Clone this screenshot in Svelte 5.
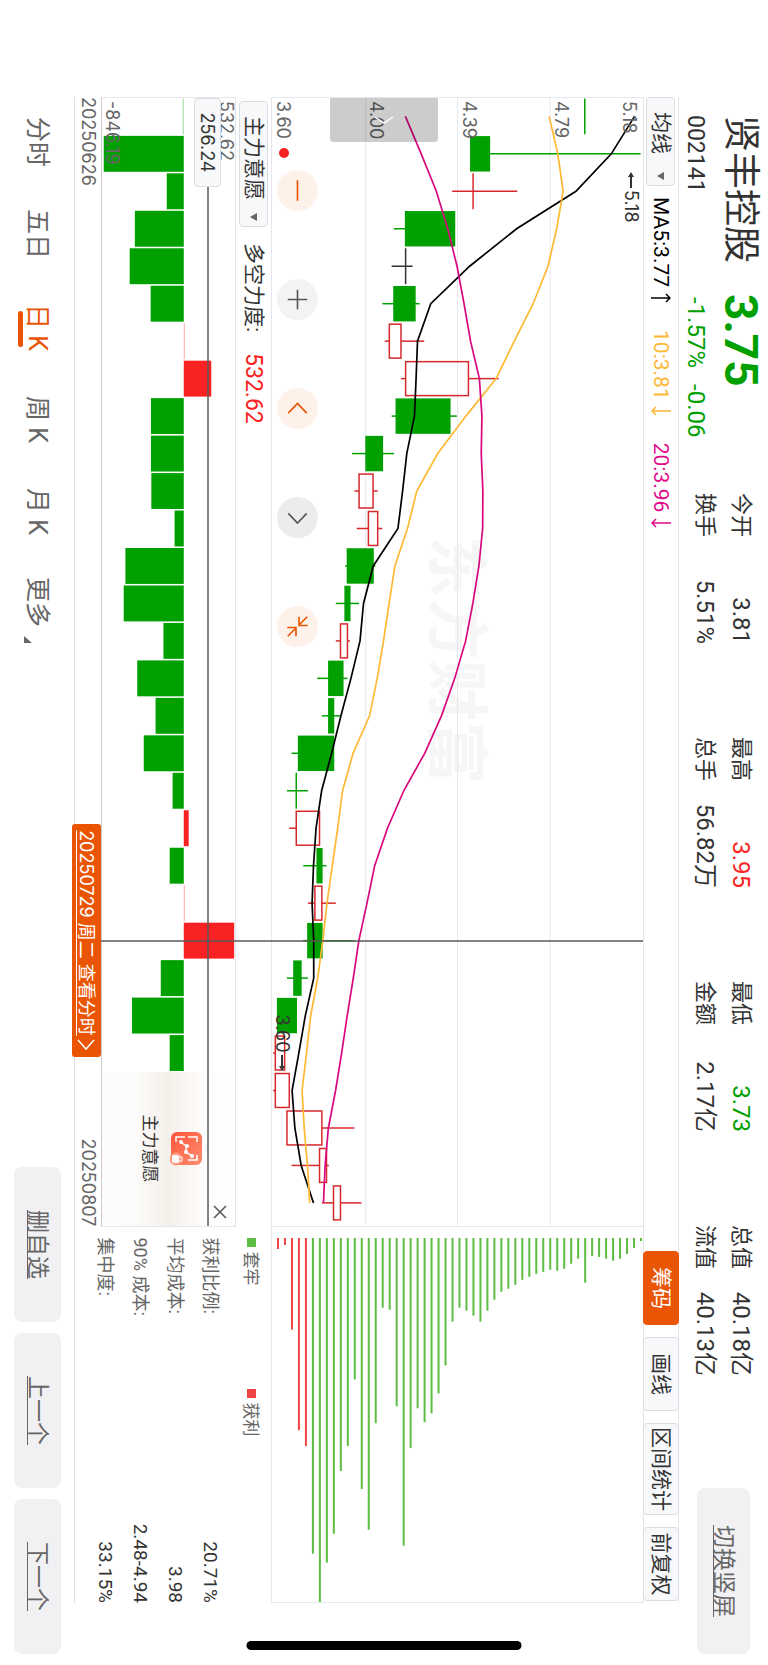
<script lang="ts">
    type Dir = 'up' | 'down' | 'flat';

    const quotes = [
        { label: '今开', value: '3.81', tone: '' },
        { label: '最高', value: '3.95', tone: 'rise' },
        { label: '最低', value: '3.73', tone: 'fall' },
        { label: '总值', value: '40.18亿', tone: '' },
        { label: '换手', value: '5.51%', tone: '' },
        { label: '总手', value: '56.82万', tone: '' },
        { label: '金额', value: '2.17亿', tone: '' },
        { label: '流值', value: '40.13亿', tone: '' },
    ];

    const tools = ['筹码', '画线', '区间统计', '前复权'];
    let activeTool = $state('筹码');

    const tabs = ['分时', '五日', '日 K', '周 K', '月 K', '更多'];
    let activeTab = $state('日 K');

    const stats = [
        ['获利比例:', '20.71%'],
        ['平均成本:', '3.98'],
        ['90% 成本:', '2.48-4.94'],
        ['集中度:', '33.15%'],
    ];

    // direction, body bottom, body top, low, high
    const candles: [Dir, number, number, number, number][] = [
        ['down', 4.94, 4.94, 4.94, 4.94],
        ['down', 4.45, 4.53, 4.45, 5.18],
        ['up', 4.46, 4.46, 4.37, 4.65],
        ['down', 4.17, 4.38, 4.12, 4.38],
        ['flat', 4.17, 4.17, 4.11, 4.2],
        ['down', 4.12, 4.21, 4.07, 4.23],
        ['up', 4.1, 4.15, 4.08, 4.25],
        ['up', 4.17, 4.44, 4.15, 4.57],
        ['down', 4.13, 4.36, 4.11, 4.39],
        ['down', 4.0, 4.07, 3.94, 4.12],
        ['up', 3.97, 4.03, 3.95, 4.05],
        ['up', 4.01, 4.05, 3.96, 4.07],
        ['down', 3.92, 4.03, 3.91, 4.04],
        ['down', 3.91, 3.93, 3.87, 3.97],
        ['up', 3.89, 3.92, 3.87, 3.93],
        ['down', 3.84, 3.9, 3.79, 3.92],
        ['down', 3.84, 3.86, 3.81, 3.89],
        ['down', 3.71, 3.86, 3.68, 3.86],
        ['down', 3.7, 3.7, 3.66, 3.75],
        ['up', 3.7, 3.8, 3.67, 3.8],
        ['down', 3.79, 3.81, 3.73, 3.83],
        ['up', 3.78, 3.81, 3.75, 3.87],
        ['down', 3.75, 3.81, 3.73, 3.95],
        ['down', 3.69, 3.72, 3.66, 3.75],
        ['down', 3.62, 3.7, 3.62, 3.7],
        ['up', 3.61, 3.65, 3.6, 3.65],
        ['up', 3.61, 3.67, 3.6, 3.67],
        ['up', 3.66, 3.81, 3.66, 3.95],
        ['up', 3.8, 3.83, 3.68, 3.84],
        ['up', 3.86, 3.89, 3.81, 3.98],
    ];

    const averages = [
        {
            name: 'ma5',
            points: [
                5.154, 5.054, 4.902, 4.647, 4.445, 4.278, 4.221, 4.215, 4.208, 4.175,
                4.157, 4.137, 4.031, 3.989, 3.974, 3.935, 3.892, 3.852, 3.809, 3.785,
                3.774, 3.768, 3.775, 3.775, 3.739, 3.711, 3.682, 3.694, 3.721, 3.774,
            ],
        },
        {
            name: 'ma10',
            points: [
                4.787, 4.824, 4.847, 4.819, 4.782, 4.718, 4.637, 4.559, 4.429, 4.308,
                4.218, 4.178, 4.124, 4.099, 4.075, 4.048, 4.015, 3.944, 3.899, 3.878,
                3.855, 3.832, 3.814, 3.792, 3.762, 3.744, 3.725, 3.734, 3.748, 3.758,
            ],
        },
        {
            name: 'ma20',
            points: [
                4.169, 4.237, 4.302, 4.351, 4.391, 4.421, 4.449, 4.487, 4.498, 4.495,
                4.502, 4.501, 4.485, 4.459, 4.428, 4.381, 4.324, 4.252, 4.162, 4.092,
                4.037, 4.004, 3.969, 3.945, 3.919, 3.895, 3.869, 3.838, 3.824, 3.817,
            ],
        },
    ];

    const force = [
        -3, -846.19, -180, -517, -572, -350, 4, 291, -347, -347, -343, -97, -617,
        -635, -215, -492, -298, -423, -118, 52, -149, 4, 532.62, -243, -548, -149,
    ];

    // chip distribution, cheapest price first
    const chips = [
        11, 7, 92, 193, 209, 317, 366, 326, 297, 234, 209, 142, 252, 293, 186, 70,
        72, 169, 309, 211, 171, 185, 176, 156, 128, 84, 70, 73, 78, 84, 73, 62, 54,
        51, 47, 42, 39, 36, 34, 32, 33, 31, 26, 21, 45, 18, 19, 21, 23, 21, 16, 10, 3,
    ];
    const profitLevels = 5;

    const x = (i: number) => 18.4 + i * 37.55;
    const y = (price: number) => 371 - (price - 3.6) * 233.3;
    const line = (points: number[]) => points.map((p, i) => `${x(i)},${y(p)}`).join(' ');
    const forceSize = (v: number) => Math.max(Math.abs(v) * 0.096, 1);
</script>

<div class="page">
    <main class="screen">
        <header>
            <div class="stock">
                <h1>贤丰控股</h1>
                <strong class="fall">3.75</strong>
                <span>002141</span>
                <span class="change fall"><span>-1.57%</span><span>-0.06</span></span>
            </div>
            <dl class="quotes">
                {#each quotes as q}
                    <div>
                        <dt>{q.label}</dt>
                        <dd class={q.tone}>{q.value}</dd>
                    </div>
                {/each}
            </dl>
            <button class="soft switch">切换竖屏</button>
        </header>

        <section class="body">
            <div class="toolbar">
                <span class="picker">
                    <select aria-label="主图指标"><option>均线</option></select>
                </span>
                <span class="ma5">MA5:3.77
                    <svg class="arrow" viewBox="0 0 10 20"><path d="M5 20V1M1 5l4-4 4 4" /></svg>
                </span>
                <span class="ma10">10:3.81
                    <svg class="arrow" viewBox="0 0 10 20"><path d="M5 0v19M1 15l4 4 4-4" /></svg>
                </span>
                <span class="ma20">20:3.96
                    <svg class="arrow" viewBox="0 0 10 20"><path d="M5 0v19M1 15l4 4 4-4" /></svg>
                </span>
                <div class="tools">
                    {#each tools as tool}
                        <button class:active={tool === activeTool} onclick={() => (activeTool = tool)}>{tool}</button>
                    {/each}
                </div>
            </div>

            <div class="columns">
                <div class="charts">
                    <div class="kline">
                        <div class="watermark">东方财富</div>
                        <svg class="plot" viewBox="0 0 1130 372" preserveAspectRatio="none">
                            {#each [93, 186, 278] as gy}
                                <line class="grid" x1="0" x2="1130" y1={gy} y2={gy} />
                            {/each}
                            {#each candles as [dir, bottom, top, low, high], i}
                                <g class={dir}>
                                    {#if high > top}
                                        <line x1={x(i)} x2={x(i)} y1={y(high)} y2={y(top)} />
                                    {/if}
                                    {#if low < bottom}
                                        <line x1={x(i)} x2={x(i)} y1={y(bottom)} y2={y(low)} />
                                    {/if}
                                    {#if top === bottom}
                                        <line x1={x(i) - 18} x2={x(i) + 18} y1={y(top)} y2={y(top)} />
                                    {:else}
                                        <rect x={x(i) - 17} y={y(top)} width="34" height={y(bottom) - y(top)} />
                                    {/if}
                                </g>
                            {/each}
                            {#each averages as ma}
                                <polyline class={ma.name} points={line(ma.points)} />
                            {/each}
                        </svg>
                        <span class="axis p0">5.18</span>
                        <span class="axis p1">4.79</span>
                        <span class="axis p2">4.39</span>
                        <span class="axis p3">4.00</span>
                        <span class="axis p4">3.60</span>
                        <span class="mark highest">
                            <svg viewBox="0 0 16 8"><path d="M16 4H3" /><path class="head" d="M0 4l5-3v6z" /></svg>5.18
                        </span>
                        <span class="mark lowest">
                            3.60<svg viewBox="0 0 16 8"><path d="M0 4h13" /><path class="head" d="M16 4l-5-3v6z" /></svg>
                        </span>
                        <button class="drawer" aria-label="展开">
                            <svg viewBox="0 0 8 20"><path d="M1 1l6 9-6 9" /></svg>
                        </button>
                        <i class="dot"></i>
                        <div class="controls">
                            <button class="warm" aria-label="缩小">
                                <svg viewBox="0 0 40 40"><path d="M20 10v20" transform="rotate(90 20 20)" /></svg>
                            </button>
                            <button aria-label="放大">
                                <svg viewBox="0 0 40 40"><path d="M10.5 20h19M20 10.5v19" /></svg>
                            </button>
                            <button class="warm" aria-label="左移">
                                <svg viewBox="0 0 40 40"><path d="M24.5 11L15 20l9.5 9" /></svg>
                            </button>
                            <button class="dim" aria-label="右移">
                                <svg viewBox="0 0 40 40"><path d="M16 11l9.5 9-9.5 9" /></svg>
                            </button>
                            <button class="warm" aria-label="收起">
                                <svg viewBox="0 0 40 40"><path d="M10.5 10.5l8 8M19 10v8.5h-8.5M29.5 29.5l-8-8M21 30v-8.5h8.5" /></svg>
                            </button>
                        </div>
                    </div>

                    <div class="indicator">
                        <span class="picker">
                            <select aria-label="副图指标"><option>主力意愿</option></select>
                        </span>
                        <span>多空力度:</span>
                        <span class="rise">532.62</span>
                    </div>

                    <div class="force">
                        <svg class="plot" viewBox="0 0 1130 135" preserveAspectRatio="none">
                            {#each force as v, i}
                                <rect
                                    class:faint={Math.abs(v) < 10}
                                    class:gain={v > 0}
                                    x={x(i) - 18}
                                    y={v > 0 ? 52 - forceSize(v) : 52}
                                    width="36"
                                    height={forceSize(v)}
                                />
                            {/each}
                        </svg>
                        <span class="axis top">532.62</span>
                        <span class="axis bottom">-846.19</span>
                        <div class="promo">
                            <svg viewBox="0 0 34 32">
                                <defs>
                                    <linearGradient id="badge" x1="0" y1="1" x2="1" y2="0">
                                        <stop offset="0" stop-color="#ff5338" />
                                        <stop offset="1" stop-color="#ff8f72" />
                                    </linearGradient>
                                </defs>
                                <rect width="33" height="31" rx="6" fill="url(#badge)" />
                                <g stroke="#fff" stroke-width="1.5">
                                    <path d="M5 14V5h5M23 5h5v9M5 17v9h5M23 26h2" />
                                    <path d="M10 21l4-5h6l4-6" />
                                </g>
                                <g fill="#fff">
                                    <circle cx="10" cy="21" r="2" />
                                    <circle cx="14" cy="15" r="2" />
                                    <circle cx="20" cy="16" r="2" />
                                    <circle cx="24" cy="10" r="2" />
                                </g>
                                <circle cx="27" cy="26" r="6.5" fill="#ff9b80" />
                                <rect x="23" y="23" width="8" height="7" rx="2" fill="#fff" />
                                <path d="M25 23v-3h4v3" stroke="#fff" />
                            </svg>
                            <span>主力意愿</span>
                        </div>
                        <i class="level"></i>
                        <span class="level-tag">256.24</span>
                        <button class="close" aria-label="关闭">
                            <svg viewBox="0 0 14 14"><path d="M1 1l12 12M13 1L1 13" /></svg>
                        </button>
                    </div>

                    <div class="dates">
                        <time>20250626</time>
                        <time>20250807</time>
                        <a href="#intraday" class="date-tag">
                            <span>20250729 周二 查看分时</span>
                            <svg viewBox="0 0 12 18"><path d="M1 1l9 8-9 8" /></svg>
                        </a>
                    </div>
                    <i class="cursor"></i>
                </div>

                <aside>
                    <svg class="chips" viewBox="0 0 377 372" preserveAspectRatio="none">
                        {#each chips as size, k}
                            <line class:profit={k < profitLevels} x1="11" x2={11 + size} y1={366 - k * 7} y2={366 - k * 7} />
                        {/each}
                    </svg>
                    <div class="legend">
                        <span>套牢</span>
                        <span class="profit">获利</span>
                    </div>
                    <dl class="stats">
                        {#each stats as [label, value]}
                            <div>
                                <dt>{label}</dt>
                                <dd>{value}</dd>
                            </div>
                        {/each}
                    </dl>
                </aside>
            </div>
        </section>

        <footer>
            <nav>
                {#each tabs as tab}
                    <button class:active={tab === activeTab} class:more={tab === '更多'} onclick={() => (activeTab = tab)}>{tab}</button>
                {/each}
            </nav>
            <button class="soft">删自选</button>
            <button class="soft">上一个</button>
            <button class="soft">下一个</button>
        </footer>
        <i class="home-bar"></i>
    </main>
</div>

<style>
    :global(body) {
        margin: 0;
        background: #fff;
    }

    .page {
        width: 100vw;
        height: 100vh;
        overflow: hidden;
    }

    /* landscape screen held in a portrait window */
    .screen {
        position: relative;
        display: flex;
        flex-direction: column;
        width: 100vh;
        height: 100vw;
        transform: translateX(100vw) rotate(90deg);
        transform-origin: 0 0;
        background: #fff;
        color: #333;
        font-family: Roboto, "Noto Sans CJK SC", sans-serif;
        font-size: 22px;
        line-height: 1;
    }

    h1,
    dl,
    dd {
        margin: 0;
    }

    button,
    select {
        margin: 0;
        padding: 0;
        border: 0;
        background: none;
        color: inherit;
        font: inherit;
        white-space: nowrap;
    }

    svg {
        flex: none;
        fill: none;
    }

    .rise {
        color: #fa2222;
    }

    .fall {
        color: #00a000;
    }

    .soft {
        flex: none;
        border-radius: 8px;
        background: #f1f1f3;
        color: #666;
        font-size: 23px;
        text-decoration: underline;
        text-underline-offset: 2px;
        text-decoration-thickness: 1px;
    }

    /* header */
    header {
        display: flex;
        align-items: flex-start;
        box-sizing: border-box;
        height: 89px;
        padding: 0 11px 0 115px;
    }

    .stock {
        display: grid;
        grid-template-columns: auto auto;
        grid-template-rows: 54px 36px;
        column-gap: 31px;
        align-items: center;
        justify-content: start;
        width: 378px;
        font-size: 23px;
    }

    h1 {
        font-size: 37px;
        font-weight: 400;
    }

    strong {
        font-size: 46px;
        font-weight: 700;
    }

    .change {
        display: flex;
        gap: 16px;
        padding-left: 3px;
        font-size: 24px;
    }

    .quotes {
        display: grid;
        grid-template-columns: repeat(4, 151px);
        grid-auto-rows: 36px;
        column-gap: 93px;
        padding-top: 9px;
    }

    .quotes div {
        display: flex;
        align-items: center;
        justify-content: space-between;
    }

    .quotes dd {
        font-size: 24px;
    }

    .switch {
        width: 166px;
        height: 53px;
        margin: 18px 0 0 auto;
    }

    /* toolbar */
    .body {
        flex: 1;
        display: flex;
        flex-direction: column;
        margin: 0 62px 0 97px;
    }

    .toolbar,
    .indicator {
        display: flex;
        align-items: center;
        box-sizing: border-box;
        font-size: 21px;
    }

    .toolbar {
        height: 36px;
        border-top: 1px solid #e6e6ea;
        border-bottom: 1px solid #e6e6ea;
    }

    .toolbar > span {
        display: flex;
        align-items: center;
        gap: 6px;
    }

    .picker {
        position: relative;
        margin-right: 12px;
    }

    .toolbar > .picker {
        margin-right: 11px;
    }

    .picker::after {
        content: "";
        position: absolute;
        right: 6px;
        top: 11px;
        border: 4px solid transparent;
        border-top: 7px solid #666;
        border-bottom: 0;
        pointer-events: none;
    }

    .picker select {
        appearance: none;
        box-sizing: border-box;
        min-width: 89px;
        height: 29px;
        padding: 0 26px 0 14px;
        border: 1px solid #dcdde2;
        border-radius: 4px;
        background: #f7f8fa;
        color: #333;
        font-size: 21px;
        line-height: 27px;
    }

    .arrow {
        width: 10px;
        height: 20px;
        stroke: currentColor;
        stroke-width: 1.5;
    }

    span.ma5 {
        color: #000;
        margin-right: 27px;
    }

    span.ma10 {
        color: #fdb933;
        margin-right: 27px;
    }

    span.ma20 {
        color: #e10a8b;
    }

    .tools {
        display: flex;
        gap: 12px;
        margin-left: auto;
        padding-right: 2px;
    }

    .tools button {
        box-sizing: border-box;
        min-width: 74px;
        height: 36px;
        padding: 0 3px;
        border: 1px solid #dcdde2;
        border-radius: 4px;
        background: #f7f8fa;
    }

    .tools .active {
        border-color: #ea5504;
        background: #ea5504;
        color: #fff;
    }

    /* charts */
    .columns {
        flex: 1;
        display: grid;
        grid-template-columns: 3fr 1fr;
    }

    .charts {
        position: relative;
        display: flex;
        flex-direction: column;
    }

    .kline {
        position: relative;
        flex: 1;
        box-sizing: border-box;
        border: solid #e6e6ee;
        border-width: 0 1px 1px 1px;
    }

    .plot {
        position: absolute;
        inset: 0;
        width: 100%;
        height: 100%;
    }

    .grid {
        stroke: #e6e8ef;
        stroke-width: 1;
    }

    .up {
        stroke: #d6292c;
        stroke-width: 1.5;
    }

    .down {
        stroke: #00a000;
        stroke-width: 1.5;
        fill: #00a000;
    }

    .flat {
        stroke: #333;
        stroke-width: 1.5;
    }

    polyline {
        stroke-width: 1.7;
    }

    polyline.ma5 {
        stroke: #000;
    }

    polyline.ma10 {
        stroke: #fdb933;
    }

    polyline.ma20 {
        stroke: #d9077f;
    }

    .watermark {
        position: absolute;
        left: 438px;
        top: 157px;
        color: #f6f6f7;
        font-size: 62px;
        font-weight: 700;
    }

    .axis,
    .mark,
    .dates,
    .level-tag {
        font-family: Inter, "Noto Sans CJK SC", sans-serif;
        font-size: 18px;
    }

    .axis {
        position: absolute;
        left: 3px;
        color: #666;
    }

    .p0 {
        top: 5px;
    }

    .p1 {
        top: 73px;
    }

    .p2 {
        top: 165px;
    }

    .p3 {
        top: 258px;
    }

    .p4 {
        bottom: 2px;
    }

    .mark {
        position: absolute;
        display: flex;
        align-items: center;
        gap: 2px;
    }

    .mark svg {
        width: 16px;
        height: 8px;
        stroke: #333;
        stroke-width: 2;
    }

    .mark .head {
        fill: #333;
        stroke: none;
    }

    .highest {
        left: 74px;
        top: 3px;
    }

    .lowest {
        right: 155px;
        bottom: 1px;
    }

    .drawer {
        position: absolute;
        left: 0;
        top: 205px;
        width: 44px;
        height: 108px;
        border-radius: 0 4px 4px 0;
        background: rgba(0, 0, 0, 0.2);
    }

    .drawer svg {
        display: block;
        width: 8px;
        height: 20px;
        margin: 0 auto;
        stroke: #fff;
        stroke-width: 1.5;
    }

    .dot {
        position: absolute;
        left: 50px;
        bottom: 7px;
        width: 10px;
        height: 10px;
        border-radius: 50%;
        background: #f82222;
    }

    .controls {
        position: absolute;
        left: 72px;
        bottom: 5px;
        display: flex;
        gap: 68px;
    }

    .controls button {
        width: 41px;
        height: 41px;
        border-radius: 50%;
        background: #f3f3f3;
        color: #555;
    }

    .controls svg {
        display: block;
        stroke: currentColor;
        stroke-width: 1.6;
    }

    .controls .warm {
        background: #fef1ea;
        color: #ea5504;
    }

    .controls .dim {
        background: #ececec;
    }

    .indicator {
        height: 35px;
        padding-left: 4px;
    }

    .indicator .picker {
        margin-right: 16px;
    }

    .indicator .rise {
        margin-left: 21px;
        font-size: 23px;
    }

    .force {
        position: relative;
        box-sizing: border-box;
        height: 135px;
        border: 1px solid #e6e6ea;
        border-bottom-color: #ccc;
    }

    .plot rect.gain {
        fill: #f82222;
    }

    .force .plot {
        fill: #00a000;
    }

    .plot .faint {
        opacity: 0.4;
    }

    .force .top {
        top: 0;
    }

    .force .bottom {
        bottom: 1px;
    }

    .promo {
        position: absolute;
        top: 0;
        right: 0;
        bottom: 0;
        display: flex;
        flex-direction: column;
        align-items: center;
        gap: 12px;
        box-sizing: border-box;
        width: 154px;
        padding-top: 33px;
        background: linear-gradient(#fdfdfe 22%, #fbf9f7 30%, #f5efe9 50%, #fcfbf9 74%, #fcfcfd);
        font-size: 17px;
    }

    .promo svg {
        width: 34px;
        height: 32px;
    }

    .level {
        position: absolute;
        left: 0;
        right: 0;
        top: 26px;
        height: 2px;
        background: rgba(90, 90, 90, 0.75);
    }

    .level-tag {
        position: absolute;
        left: 0;
        top: 14px;
        box-sizing: border-box;
        width: 89px;
        height: 27px;
        border: 1px solid #dcdde2;
        border-radius: 4px;
        background: #f7f8fa;
        line-height: 25px;
        text-align: center;
    }

    .close {
        position: absolute;
        top: 8px;
        right: 7px;
        width: 14px;
        height: 14px;
    }

    .close svg {
        display: block;
        stroke: #555;
        stroke-width: 1.5;
    }

    .dates {
        position: relative;
        display: flex;
        align-items: center;
        justify-content: space-between;
        height: 26px;
        color: #666;
    }

    .date-tag {
        position: absolute;
        left: 727px;
        top: 0;
        display: flex;
        align-items: center;
        justify-content: center;
        gap: 3px;
        box-sizing: border-box;
        width: 233px;
        height: 29px;
        border-radius: 3px;
        background: #ea5504;
        color: #fff;
        text-underline-offset: 3px;
        text-decoration-thickness: 1px;
        white-space: nowrap;
        z-index: 1;
    }

    .date-tag svg {
        width: 12px;
        height: 18px;
        stroke: #fff;
        stroke-width: 1.5;
    }

    .cursor {
        position: absolute;
        left: 843px;
        top: 0;
        bottom: 26px;
        width: 2px;
        background: rgba(90, 90, 90, 0.75);
    }

    /* chip distribution */
    aside {
        display: flex;
        flex-direction: column;
    }

    .chips {
        box-sizing: border-box;
        width: 100%;
        height: 372px;
        border: solid #e6e6ee;
        border-width: 0 1px 1px 0;
        stroke: #5cbd42;
        stroke-width: 2;
    }

    .chips .profit {
        stroke: #ee4444;
    }

    .legend {
        display: grid;
        grid-template-columns: 151px 1fr;
        align-items: center;
        height: 40px;
        padding-left: 11px;
        color: #666;
        font-size: 17px;
    }

    .legend span::before {
        content: "";
        display: inline-block;
        width: 9px;
        height: 9px;
        margin-right: 5px;
        background: #5cbd42;
        vertical-align: 2px;
    }

    .legend .profit::before {
        background: #ee4444;
    }

    .stats {
        padding-top: 3px;
    }

    .stats div {
        display: flex;
        align-items: center;
        justify-content: space-between;
        height: 35px;
        padding-left: 11px;
    }

    .stats dt {
        color: #666;
        font-size: 18px;
    }

    .stats dd {
        font-size: 19px;
    }

    /* footer */
    footer {
        position: relative;
        display: flex;
        gap: 11px;
        box-sizing: border-box;
        height: 75px;
        margin-left: 97px;
        padding: 14px 11px 14px 20px;
    }

    footer::before {
        content: "";
        position: absolute;
        left: 0;
        right: 62px;
        top: 0;
        border-top: 1px solid #e0e0e0;
    }

    nav {
        flex: 1;
        display: flex;
        gap: 42px;
        color: #666;
        font-size: 25px;
    }

    nav button {
        position: relative;
        width: 50px;
        text-align: right;
    }

    nav .active {
        color: #ea5504;
    }

    nav .active::after {
        content: "";
        position: absolute;
        right: 4px;
        bottom: 4px;
        width: 36px;
        height: 5px;
        border-radius: 3px;
        background: #ea5504;
    }

    nav .more::after {
        content: "";
        position: absolute;
        right: -16px;
        bottom: 10px;
        width: 0;
        height: 0;
        border-radius: 0;
        background: none;
        border-left: 7px solid transparent;
        border-bottom: 8px solid #666;
    }

    footer .soft {
        width: 155px;
    }

    .home-bar {
        position: absolute;
        top: 50%;
        right: 15px;
        width: 9px;
        height: 275px;
        border-radius: 5px;
        background: #000;
        transform: translateY(-50%);
    }
</style>
